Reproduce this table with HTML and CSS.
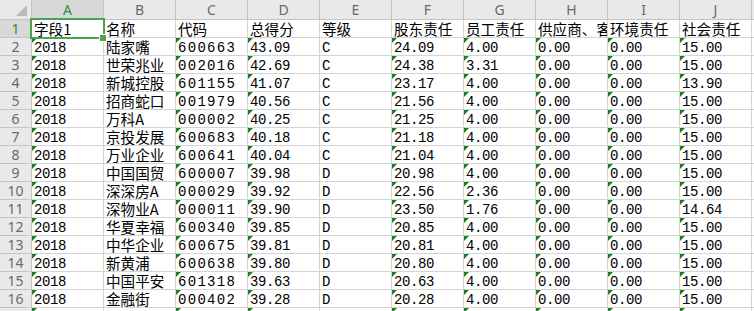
FILE: index.html
```html
<!DOCTYPE html>
<html lang="zh">
<head>
<meta charset="utf-8">
<title>Sheet</title>
<link rel="stylesheet" href="styles.css">
</head>
<body>
<div class="sheet">
  <div class="corner"><svg class="corner-tri" width="31" height="19" viewBox="0 0 31 19"><polygon points="27,5 27,16 16,16" fill="#b9b9b9"/></svg></div>
  <div class="ch selh">A</div><div class="ch">B</div><div class="ch">C</div><div class="ch">D</div><div class="ch">E</div><div class="ch">F</div><div class="ch">G</div><div class="ch">H</div><div class="ch">I</div><div class="ch">J</div><div class="ch"></div>

  <div class="rh selh">1</div>
  <div class="c t active">字段1<span class="selbox"></span><span class="handle"></span></div><div class="c t">名称</div><div class="c t">代码</div><div class="c t">总得分</div><div class="c t">等级</div><div class="c t">股东责任</div><div class="c t">员工责任</div><div class="c t">供应商、客户和消费者权益责任</div><div class="c t">环境责任</div><div class="c t">社会责任</div><div class="c"></div>

  <div class="rh">2</div>
  <div class="c w n">2018</div><div class="c t">陆家嘴</div><div class="c w n code">600663</div><div class="c w n">43.09</div><div class="c n">C</div><div class="c w n">24.09</div><div class="c w n">4.00</div><div class="c w n">0.00</div><div class="c w n">0.00</div><div class="c w n">15.00</div><div class="c"></div>

  <div class="rh">3</div>
  <div class="c w n">2018</div><div class="c t">世荣兆业</div><div class="c w n code">002016</div><div class="c w n">42.69</div><div class="c n">C</div><div class="c w n">24.38</div><div class="c w n">3.31</div><div class="c w n">0.00</div><div class="c w n">0.00</div><div class="c w n">15.00</div><div class="c"></div>

  <div class="rh">4</div>
  <div class="c w n">2018</div><div class="c t">新城控股</div><div class="c w n code">601155</div><div class="c w n">41.07</div><div class="c n">C</div><div class="c w n">23.17</div><div class="c w n">4.00</div><div class="c w n">0.00</div><div class="c w n">0.00</div><div class="c w n">13.90</div><div class="c"></div>

  <div class="rh">5</div>
  <div class="c w n">2018</div><div class="c t">招商蛇口</div><div class="c w n code">001979</div><div class="c w n">40.56</div><div class="c n">C</div><div class="c w n">21.56</div><div class="c w n">4.00</div><div class="c w n">0.00</div><div class="c w n">0.00</div><div class="c w n">15.00</div><div class="c"></div>

  <div class="rh">6</div>
  <div class="c w n">2018</div><div class="c t">万科A</div><div class="c w n code">000002</div><div class="c w n">40.25</div><div class="c n">C</div><div class="c w n">21.25</div><div class="c w n">4.00</div><div class="c w n">0.00</div><div class="c w n">0.00</div><div class="c w n">15.00</div><div class="c"></div>

  <div class="rh">7</div>
  <div class="c w n">2018</div><div class="c t">京投发展</div><div class="c w n code">600683</div><div class="c w n">40.18</div><div class="c n">C</div><div class="c w n">21.18</div><div class="c w n">4.00</div><div class="c w n">0.00</div><div class="c w n">0.00</div><div class="c w n">15.00</div><div class="c"></div>

  <div class="rh">8</div>
  <div class="c w n">2018</div><div class="c t">万业企业</div><div class="c w n code">600641</div><div class="c w n">40.04</div><div class="c n">C</div><div class="c w n">21.04</div><div class="c w n">4.00</div><div class="c w n">0.00</div><div class="c w n">0.00</div><div class="c w n">15.00</div><div class="c"></div>

  <div class="rh">9</div>
  <div class="c w n">2018</div><div class="c t">中国国贸</div><div class="c w n code">600007</div><div class="c w n">39.98</div><div class="c n">D</div><div class="c w n">20.98</div><div class="c w n">4.00</div><div class="c w n">0.00</div><div class="c w n">0.00</div><div class="c w n">15.00</div><div class="c"></div>

  <div class="rh">10</div>
  <div class="c w n">2018</div><div class="c t">深深房A</div><div class="c w n code">000029</div><div class="c w n">39.92</div><div class="c n">D</div><div class="c w n">22.56</div><div class="c w n">2.36</div><div class="c w n">0.00</div><div class="c w n">0.00</div><div class="c w n">15.00</div><div class="c"></div>

  <div class="rh">11</div>
  <div class="c w n">2018</div><div class="c t">深物业A</div><div class="c w n code">000011</div><div class="c w n">39.90</div><div class="c n">D</div><div class="c w n">23.50</div><div class="c w n">1.76</div><div class="c w n">0.00</div><div class="c w n">0.00</div><div class="c w n">14.64</div><div class="c"></div>

  <div class="rh">12</div>
  <div class="c w n">2018</div><div class="c t">华夏幸福</div><div class="c w n code">600340</div><div class="c w n">39.85</div><div class="c n">D</div><div class="c w n">20.85</div><div class="c w n">4.00</div><div class="c w n">0.00</div><div class="c w n">0.00</div><div class="c w n">15.00</div><div class="c"></div>

  <div class="rh">13</div>
  <div class="c w n">2018</div><div class="c t">中华企业</div><div class="c w n code">600675</div><div class="c w n">39.81</div><div class="c n">D</div><div class="c w n">20.81</div><div class="c w n">4.00</div><div class="c w n">0.00</div><div class="c w n">0.00</div><div class="c w n">15.00</div><div class="c"></div>

  <div class="rh">14</div>
  <div class="c w n">2018</div><div class="c t">新黄浦</div><div class="c w n code">600638</div><div class="c w n">39.80</div><div class="c n">D</div><div class="c w n">20.80</div><div class="c w n">4.00</div><div class="c w n">0.00</div><div class="c w n">0.00</div><div class="c w n">15.00</div><div class="c"></div>

  <div class="rh">15</div>
  <div class="c w n">2018</div><div class="c t">中国平安</div><div class="c w n code">601318</div><div class="c w n">39.63</div><div class="c n">D</div><div class="c w n">20.63</div><div class="c w n">4.00</div><div class="c w n">0.00</div><div class="c w n">0.00</div><div class="c w n">15.00</div><div class="c"></div>

  <div class="rh">16</div>
  <div class="c w n">2018</div><div class="c t">金融街</div><div class="c w n code">000402</div><div class="c w n">39.28</div><div class="c n">D</div><div class="c w n">20.28</div><div class="c w n">4.00</div><div class="c w n">0.00</div><div class="c w n">0.00</div><div class="c w n">15.00</div><div class="c"></div>

  <div class="rh"></div>
  <div class="c w"></div><div class="c"></div><div class="c w"></div><div class="c w"></div><div class="c"></div><div class="c w"></div><div class="c w"></div><div class="c w"></div><div class="c w"></div><div class="c w"></div><div class="c"></div>
</div>
</body>
</html>
```
FILE: styles.css
```css
html, body {
  margin: 0;
  padding: 0;
  background: #ffffff;
  overflow: hidden;
}

.sheet {
  display: grid;
  grid-template-columns: 32px repeat(10, 72px) 1fr;
  grid-template-rows: 20px;
  grid-auto-rows: 18px;
  width: 754px;
}

.sheet > div {
  box-sizing: border-box;
  border-right: 1px solid #d4d4d4;
  border-bottom: 1px solid #d4d4d4;
  overflow-x: clip;
  overflow-y: visible;
  white-space: nowrap;
  position: relative;
}

.corner {
  background: #e9e9e9;
  border-color: #c4c4c4 !important;
}

.corner-tri {
  display: block;
}

.ch {
  background: #e9e9e9;
  border-right-color: #c4c4c4 !important;
  border-bottom-color: #c4c4c4 !important;
  font-family: "Noto Sans", "Liberation Sans", sans-serif;
  font-size: 14px;
  line-height: 19px;
  color: #6a6a6a;
  text-align: center;
}

.rh {
  background: #e9e9e9;
  border-right-color: #c4c4c4 !important;
  border-bottom-color: #c4c4c4 !important;
  font-family: "Noto Sans", "Liberation Sans", sans-serif;
  font-size: 14px;
  line-height: 17px;
  color: #6a6a6a;
  text-align: center;
}

.selh {
  background: #d8d8d8;
  color: #2e8b36;
}

.c {
  padding-left: 2px;
  color: #000000;
}

.t {
  font-family: "Noto Sans CJK SC", "Noto Sans", sans-serif;
  font-size: 14.6px;
  line-height: 17px;
}

.n {
  font-family: "Liberation Mono", "DejaVu Sans Mono", monospace;
  font-size: 14px;
  letter-spacing: -0.4px;
  line-height: 14px;
  padding-top: 3px;
}

.code {
  letter-spacing: 1.3px;
}

.w::before {
  content: "";
  position: absolute;
  top: 0;
  left: 0;
  width: 0;
  height: 0;
  border-top: 5px solid #13801a;
  border-right: 5px solid transparent;
}

.active {
  overflow: visible !important;
  z-index: 2;
}

.selbox {
  position: absolute;
  left: -2px;
  top: -2px;
  width: 75px;
  height: 21px;
  box-sizing: border-box;
  border: 2px solid #4ba34f;
  pointer-events: none;
}

.handle {
  position: absolute;
  left: 68px;
  top: 15px;
  width: 6px;
  height: 6px;
  box-sizing: border-box;
  background: #4ba34f;
  outline: 1px solid #ffffff;
}
```
